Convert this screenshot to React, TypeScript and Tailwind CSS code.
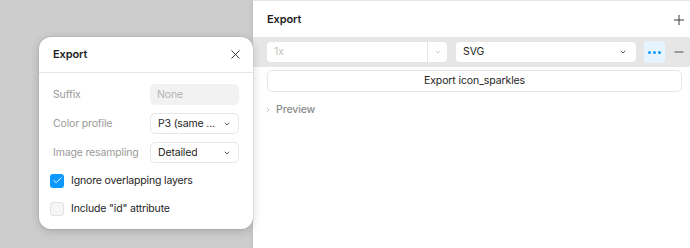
import { X, Plus, Minus, ChevronDown, ChevronRight, Check } from "lucide-react";

const rows = [
  { label: "Color profile", value: "P3 (same ..." },
  { label: "Image resampling", value: "Detailed" },
];

function Popover() {
  return (
    <div className="absolute left-[39px] top-[37px] w-[214px] h-[192px] rounded-[12px] bg-white shadow-[0_2px_10px_rgba(0,0,0,0.18),0_0_0_1px_rgba(0,0,0,0.04)]">
      {/* Header */}
      <div className="flex h-[36px] items-center justify-between border-b border-[#e6e6e6] pl-[14px] pr-[10px]">
        <span className="text-[11px] font-semibold tracking-[-0.01em] text-[#1e1e1e]">Export</span>
        <X size={15} strokeWidth={1.4} className="text-[#1e1e1e]" />
      </div>

      <div className="flex flex-col gap-[8px] px-[14px] pt-[11px] text-[10.5px] tracking-[-0.015em]">
        <div className="flex items-center justify-between">
          <span className="text-[#9a9a9a]">Suffix</span>
          <div className="flex h-[21px] w-[89px] items-center rounded-[5px] bg-[#f2f2f2] px-[7px] text-[#b3b3b3]">
            None
          </div>
        </div>
        {rows.map((r) => (
          <div key={r.label} className="flex items-center justify-between">
            <span className="text-[#9a9a9a]">{r.label}</span>
            <div className="flex h-[21px] w-[89px] items-center justify-between rounded-[5px] border border-[#e6e6e6] pl-[7px] pr-[7px] text-[#1e1e1e]">
              <span className="truncate">{r.value}</span>
              <ChevronDown size={8} strokeWidth={2.4} className="text-[#333]" />
            </div>
          </div>
        ))}
      </div>

      <div className="mt-[10px] flex flex-col gap-[12px] px-[11px] text-[10.5px] tracking-[-0.015em]">
        <div className="flex items-center gap-[7px]">
          <div className="flex h-[14px] w-[14px] items-center justify-center rounded-[3px] bg-[#0d99ff]">
            <Check size={11} strokeWidth={2} className="text-white" />
          </div>
          <span className="text-[#1e1e1e]">Ignore overlapping layers</span>
        </div>
        <div className="flex items-center gap-[7px]">
          <div className="h-[14px] w-[14px] rounded-[3px] border border-[#e3e3e3] bg-[#f5f5f5]" />
          <span className="text-[#1e1e1e]">Include "id" attribute</span>
        </div>
      </div>
    </div>
  );
}

export default function App() {
  return (
    <div className="relative flex h-[248px] w-[690px] overflow-hidden bg-[#cdcdcd] font-['Inter',sans-serif]">
      <div className="w-[253px] shrink-0" />

      <div className="flex flex-1 flex-col border-t border-[#e6e6e6] bg-white text-[10.5px] tracking-[-0.01em] shadow-[-2px_0_4px_rgba(0,0,0,0.06)]">
        <div className="flex h-[36px] items-center justify-between pl-[14px] pr-[3px] pt-[1px]">
          <span className="text-[11px] font-semibold text-[#1e1e1e]">Export</span>
          <Plus size={16} strokeWidth={1.3} className="text-[#1e1e1e]" />
        </div>

        <div className="flex h-[30px] items-center bg-[#e6e6e6] pl-[14px]">
          <div className="flex h-[20px] w-[180px] items-center rounded-[4px] bg-white">
            <span className="flex-1 pl-[7px] text-[#c2c2c2]">1x</span>
            <div className="flex h-full w-[20px] items-center justify-center border-l border-[#e6e6e6]">
              <ChevronDown size={8} strokeWidth={2} className="text-[#b3b3b3]" />
            </div>
          </div>
          <div className="ml-[9px] flex h-[20px] w-[180px] items-center justify-between rounded-[4px] bg-white pl-[7px] pr-[9px]">
            <span className="text-[#1e1e1e]">SVG</span>
            <ChevronDown size={8} strokeWidth={2.4} className="text-[#333]" />
          </div>
          <div className="ml-[8px] flex h-[22px] w-[21px] items-center justify-center gap-[2px] rounded-[4px] bg-[#e5f4ff]">
            <span className="h-[3px] w-[3px] rounded-full bg-[#0d99ff]" />
            <span className="h-[3px] w-[3px] rounded-full bg-[#0d99ff]" />
            <span className="h-[3px] w-[3px] rounded-full bg-[#0d99ff]" />
          </div>
          <Minus size={14} strokeWidth={1.3} className="ml-[7px] text-[#1e1e1e]" />
        </div>

        <div className="mt-[3px] pl-[14px] pr-[8px]">
          <div className="flex h-[22px] items-center justify-center rounded-[5px] border border-[#e6e6e6] text-[#1e1e1e]">
            Export icon_sparkles
          </div>
        </div>

        <div className="mt-[10px] flex items-center gap-[4px] pl-[11px]">
          <ChevronRight size={8} strokeWidth={1.8} className="text-[#a0a0a0]" />
          <span className="font-medium text-[#8c8c8c]">Preview</span>
        </div>
      </div>

      <Popover />
    </div>
  );
}
